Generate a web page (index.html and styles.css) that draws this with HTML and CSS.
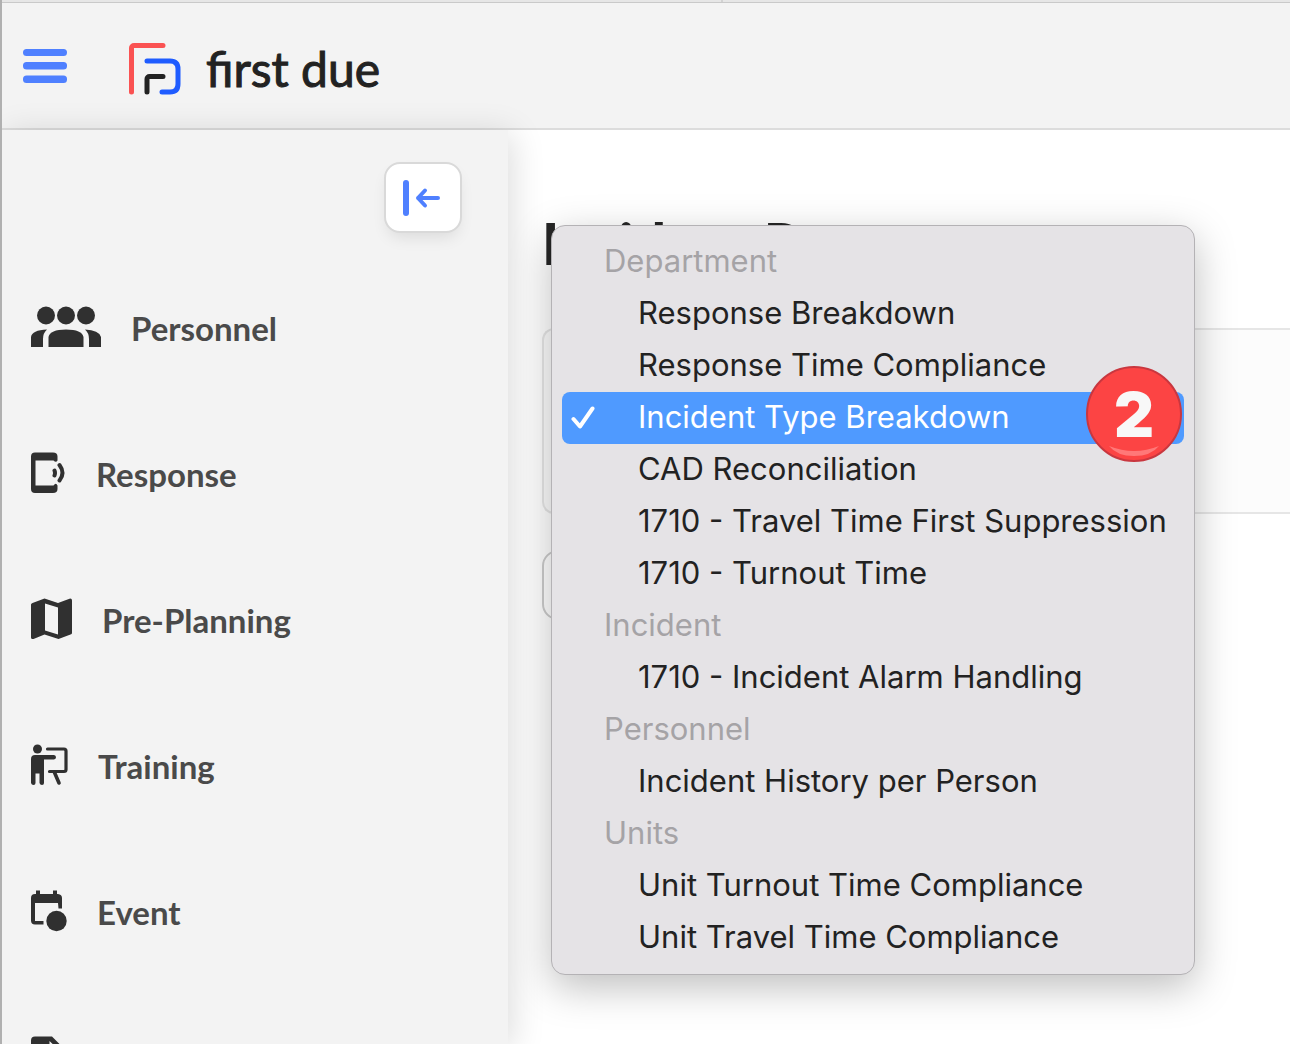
FILE: index.html
```html
<!DOCTYPE html>
<html lang="en">
  <head>
    <meta charset="UTF-8" />
    <meta name="viewport" content="width=device-width, initial-scale=1.0" />
    <title>First Due</title>
    <link rel="stylesheet" href="styles.css">
  </head>
  <body>
    <div class="tab-strip"><span></span><span></span></div>

    <header class="header">
      <button class="menu-btn" aria-label="Menu">
        <svg width="44" height="34" viewBox="0 0 44 34" fill="#4f80ff">
          <rect width="44" height="7" rx="3.5" />
          <rect y="13" width="44" height="7.500" rx="3.5" />
          <rect y="26.500" width="44" height="7.500" rx="3.5" />
        </svg>
      </button>
      <a class="logo" href="#">
        <svg width="54" height="54" viewBox="0 0 54 54" fill="none" stroke-width="5" stroke-linecap="round" stroke-linejoin="round">
          <path stroke="#fa5252" d="M3.500 50V6a2.500 2.500 0 0 1 2.500-2.500H35" />
          <path stroke="#1f5cff" d="M19 19H42Q50 19 50 27V42Q50 50 42 50H34" />
          <path stroke="#222" d="M19 50V37a2.500 2.500 0 0 1 2.500-2.500H35" />
        </svg>
        <span>first due</span>
      </a>
    </header>

    <div class="layout">
      <aside class="sidebar">
        <button class="collapse-btn" aria-label="Collapse sidebar">
          <svg width="42" height="38" viewBox="0 0 42 38" fill="none" stroke="#4f80ff" stroke-linecap="round" stroke-linejoin="round">
            <path stroke-width="6" d="M4 4V34" />
            <path stroke-width="4" d="M36 19H16M23 11.500L16 19l7 7.500" />
          </svg>
        </button>

        <nav class="nav">
          <a class="nav-link" href="#">
            <svg width="70" height="42" viewBox="0 0 70 42" fill="#303030">
              <circle cx="15" cy="9.500" r="9" />
              <circle cx="35" cy="9.500" r="9" />
              <circle cx="55" cy="9.500" r="9" />
              <path d="M0 41V31Q1 24 16 23.500Q12 27 12 33V41Z" />
              <path d="M17.500 41V31Q19 23.500 35 23.500T52.500 31V41Z" />
              <path d="M70 41V31Q68 24 54 23.500Q58 27 58 33V41Z" />
            </svg>
            <span>Personnel</span>
          </a>
          <a class="nav-link" href="#">
            <svg width="35" height="42" viewBox="0 0 35 42">
              <path fill="#303030" d="M4 .5H22Q26.500.5 26.500 4.500V8.500Q25 11 22.500 8.500H4.500V33.500H22.500Q25 30 26.500 33.500V37Q26.500 41 22 41H4Q0 41 0 37V4.500Q0 .5 4 .5Z" />
              <path fill="none" stroke="#303030" stroke-width="4" stroke-linecap="round" d="M23.500 18.500Q24.500 21 23.500 23.500M28.500 13Q34.500 21 28.500 28.500" />
            </svg>
            <span>Response</span>
          </a>
          <a class="nav-link" href="#">
            <svg width="41" height="42" viewBox="0 0 41 42" fill="#303030" fill-rule="evenodd">
              <path d="M0 6.500Q0 5.500 1.500 5L13.500.5 27 5 38.500.7Q41 .2 41 2.500V35Q41 36 39.500 36.500L27.500 41 13.500 36.500 2.500 41Q0 41.500 0 39.500ZM14 5.500V32.500L27 36.500V9.500Z" />
            </svg>
            <span>Pre-Planning</span>
          </a>
          <a class="nav-link" href="#">
            <svg width="37" height="42" viewBox="0 0 37 42" fill="none" stroke="#303030" stroke-linecap="round" stroke-linejoin="round">
              <circle cx="6.500" cy="5" r="4.500" fill="#303030" stroke="none" />
              <path fill="#303030" stroke="none" d="M4 11H23Q25 11.500 25 13.200T23 15.500H13V39Q13 41 11 41T8.500 39V29.500H4.500V39Q4.500 41 2.500 41T0 39V15Q0 11 4 11Z" />
              <path stroke-width="3.200" d="M16.500 5H33Q35 5 35 7V25.500Q35 27.500 33 27.500H18.500" />
              <path stroke-width="3.600" d="M23.500 28.500L28 39" />
            </svg>
            <span>Training</span>
          </a>
          <a class="nav-link" href="#">
            <svg width="36" height="42" viewBox="0 0 36 42" fill="#303030">
              <path fill-rule="evenodd" d="M5 .5H9V4H22V.5H26V4H27Q31 4.500 31 8V18.500H27.500L27 13H4V31H12.500V34.500H4Q0 34.500 0 30.500V8Q0 4 4 4H5Z" />
              <circle cx="25.500" cy="31" r="10.200" />
            </svg>
            <span>Event</span>
          </a>
          <a class="nav-link" href="#" aria-label="Documents">
            <svg width="34" height="42" viewBox="0 0 34 42" fill="#303030">
              <path fill-rule="evenodd" d="M4 .5H21L33 12.500V37Q33 41 29 41H4Q0 41 0 37V4.500Q0 .5 4 .5ZM18.500 5V15H29Z" />
            </svg>
          </a>
        </nav>
      </aside>

      <main class="content">
        <h1 class="title">Incident Reports</h1>
        <div class="panel"></div>
        <button class="field" aria-label="Report type" aria-haspopup="true"></button>

        <!-- Report type menu -->
        <div class="menu">
          <h2 class="menu-group">Department</h2>
          <button class="menu-item">Response Breakdown</button>
          <button class="menu-item">Response Time Compliance</button>
          <button class="menu-item selected">
            <svg class="check" width="24" height="24" viewBox="0 0 24 24" fill="none" stroke="#fff" stroke-width="4" stroke-linecap="round" stroke-linejoin="round">
              <path d="M2.500 13L9 20.500 21.500 2.500" />
            </svg>
            Incident Type Breakdown
            <span class="badge">
              2
              <svg class="shine" width="50" height="12" viewBox="0 0 50 12">
                <path fill="#ff7878" d="M0 1Q25 11 50 1Q42 11 25 11T0 1Z" />
              </svg>
            </span>
          </button>
          <button class="menu-item">CAD Reconciliation</button>
          <button class="menu-item">1710 - Travel Time First Suppression</button>
          <button class="menu-item">1710 - Turnout Time</button>
          <h2 class="menu-group">Incident</h2>
          <button class="menu-item">1710 - Incident Alarm Handling</button>
          <h2 class="menu-group">Personnel</h2>
          <button class="menu-item">Incident History per Person</button>
          <h2 class="menu-group">Units</h2>
          <button class="menu-item">Unit Turnout Time Compliance</button>
          <button class="menu-item">Unit Travel Time Compliance</button>
        </div>
      </main>
    </div>
  </body>
</html>
```
FILE: styles.css
```css
:root {
  --bg: #f3f3f3;
  --border: #d9d9d9;
  --text: #4a4a4a;
  --dark: #262626;
  --menu-bg: #e5e3e6;
  --accent: #4f9aff;
  --red: #fc4444;
}

* {
  box-sizing: border-box;
}

body {
  margin: 0;
  height: 100vh;
  overflow: hidden;
  display: flex;
  flex-direction: column;
  border-left: 2px solid #b0b0b0;
  background: #fff;
  font-family: Lato, sans-serif;
  color: var(--text);
}

button {
  border: none;
  padding: 0;
  background: none;
  font: inherit;
  color: inherit;
  cursor: pointer;
}

svg {
  display: block;
  flex-shrink: 0;
}

.tab-strip {
  display: flex;
  flex-shrink: 0;
  height: 3px;
  background: #e6e6e6;
  border-bottom: 1px solid #c9c9c9;
}

.tab-strip span {
  flex: 1;
}

.tab-strip span:first-child {
  flex: 0 0 56%;
  border-right: 2px solid #d2d2d2;
}

.header {
  display: flex;
  flex-shrink: 0;
  align-items: center;
  gap: 61px;
  height: 127px;
  padding: 0 21px;
  background: var(--bg);
  border-bottom: 2px solid #dcdcdc;
}

.logo {
  display: flex;
  align-items: center;
  gap: 24px;
  padding-top: 6px;
  font-size: 48px;
  line-height: 54px;
  color: #222;
  text-decoration: none;
  -webkit-text-stroke: 1px #222;
}

.layout {
  display: flex;
  flex: 1;
  min-height: 0;
}

.sidebar {
  position: relative;
  display: flex;
  flex-direction: column;
  flex: 0 0 506px;
  background: var(--bg);
  box-shadow: 4px 4px 32px rgba(0, 0, 0, 0.14);
}

.collapse-btn {
  display: flex;
  align-items: center;
  justify-content: center;
  align-self: flex-end;
  flex-shrink: 0;
  width: 78px;
  height: 71px;
  margin: 32px 46px 21px;
  border: 2px solid var(--border);
  border-radius: 16px;
  background: #fff;
  box-shadow: 0 8px 16px -4px rgba(0, 0, 0, 0.1);
}

.nav {
  flex: 1;
  min-height: 0;
  overflow: hidden;
}

.nav-link {
  display: flex;
  align-items: center;
  gap: 30px;
  height: 146px;
  padding-left: 29px;
  font-size: 33px;
  font-weight: bold;
  line-height: 40px;
  color: var(--text);
  text-decoration: none;
}

.nav-link span {
  padding-top: 2px;
}

.content {
  position: relative;
  flex: 1;
  padding: 78px 0 0 34px;
}

.title {
  margin: 0 0 50px;
  font-size: 57px;
  font-weight: 900;
  line-height: 70px;
  color: var(--dark);
}

.panel {
  height: 186px;
  margin-bottom: 36px;
  border: 2px solid #e6e6e6;
  border-right: none;
  border-radius: 12px 0 0 12px;
  background: #fcfcfc;
}

.field {
  display: block;
  width: 400px;
  height: 70px;
  border: 2px solid #ccc;
  border-radius: 16px;
  background: #fff;
}

.menu {
  position: absolute;
  top: 95px;
  left: 43px;
  width: 644px;
  padding: 10px;
  border: 1px solid #b4b2b5;
  border-radius: 14px;
  background: var(--menu-bg);
  box-shadow: 0 12px 40px rgba(0, 0, 0, 0.26);
  font-family: Inter, sans-serif;
  font-size: 31px;
  line-height: 50px;
  color: #222;
}

.menu-group {
  margin: 0;
  padding: 0 0 2px 42px;
  font-size: inherit;
  font-weight: normal;
  color: #a5a3a6;
}

.menu-item {
  position: relative;
  display: block;
  width: 100%;
  padding: 0 0 2px 76px;
  border-radius: 8px;
  text-align: left;
  white-space: nowrap;
}

.menu-item.selected {
  background: var(--accent);
  color: #fff;
}

.check {
  position: absolute;
  top: 14px;
  left: 9px;
}

.badge {
  position: absolute;
  top: -26px;
  right: 2px;
  width: 96px;
  height: 96px;
  border: 2px solid #c9373f;
  border-radius: 50%;
  background: var(--red);
  font-size: 62px;
  font-weight: 900;
  line-height: 94px;
  text-align: center;
  color: #f8f8f8;
}

.shine {
  position: absolute;
  bottom: 3px;
  left: 21px;
}
```
